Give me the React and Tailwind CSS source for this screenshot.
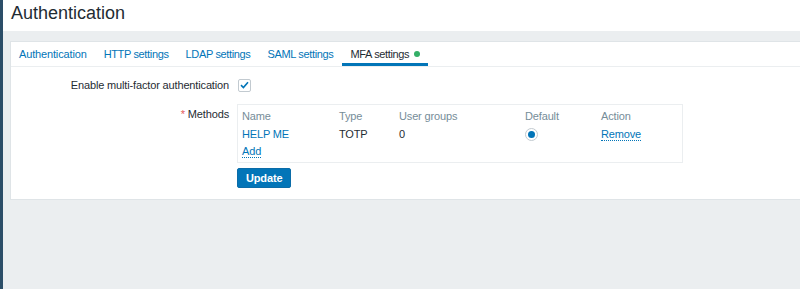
import React from 'react';

const TABS = ['Authentication', 'HTTP settings', 'LDAP settings', 'SAML settings'];

export default function App() {
  return (
    <div className="h-[289px] w-[800px] flex bg-[#ebeef0] overflow-hidden text-[11px] tracking-[-0.15px] text-[#1f2c33]" style={{ fontFamily: '"Liberation Sans", Arial, sans-serif' }}>
      <div className="w-[3px] bg-[#2c4e68] shrink-0" />
      <div className="flex-1 flex flex-col">
        {/* Header */}
        <div className="h-[31px] bg-white pl-[8px] pt-[4px]">
          <h1 className="text-[18px] leading-[18px] tracking-normal">Authentication</h1>
        </div>

        {/* Panel */}
        <div className="mt-[10px] ml-[7px] bg-white border border-[#dfe4e7] border-r-0 h-[159px]">
          {/* Tabs */}
          <div className="flex h-[25px] border-b border-[#ebeef0] tracking-[-0.35px]">
            {TABS.map((t, i) => (
              <div key={t} className={`${i === 0 ? 'tracking-[-0.15px]' : ''} px-[8px] flex items-center text-[#0275b8] mr-[1px]`}>{t}</div>
            ))}
            <div className="px-[8px] flex items-center gap-[5px] border-b-[3px] border-[#0275b8] pt-[3px]">
              MFA settings
              <span className="w-[6px] h-[6px] rounded-full bg-[#34af67]" />
            </div>
          </div>

          {/* Form */}
          <div className="pt-[11px]">
            <div className="flex items-center h-[14px]">
              <div className="w-[218px] text-right">Enable multi-factor authentication</div>
              <div className="ml-[9px] w-[13px] h-[13px] border border-[#c2cad0] rounded-[2px] flex items-center justify-center">
                <svg width="9" height="8" viewBox="0 0 9 8">
                  <path d="M1 4.2 L3.4 6.5 L8 1.3" fill="none" stroke="#0275b8" strokeWidth="1.6" />
                </svg>
              </div>
            </div>

            <div className="flex mt-[12px]">
              <div className="w-[218px] text-right pt-[2px]">
                <span className="text-[#e45959]">*</span> Methods
              </div>
              <div className="ml-[8px] w-[446px] h-[59px] border border-[#ebeef0] px-[4px] pt-[3px]">
                <div className="flex h-[17px] items-center text-[#768d99]">
                  <div className="w-[97px]">Name</div>
                  <div className="w-[60px]">Type</div>
                  <div className="w-[126px]">User groups</div>
                  <div className="w-[76px]">Default</div>
                  <div>Action</div>
                </div>
                <div className="flex h-[18px] items-center">
                  <div className="w-[97px] text-[#0275b8]">HELP ME</div>
                  <div className="w-[60px]">TOTP</div>
                  <div className="w-[126px]">0</div>
                  <div className="w-[76px]">
                    <div className="w-[13px] h-[13px] rounded-full border border-[#c2cad0] flex items-center justify-center">
                      <div className="w-[7px] h-[7px] rounded-full bg-[#0275b8]" />
                    </div>
                  </div>
                  <div className="text-[#0275b8] border-b border-dotted border-[#0275b8] leading-[12px]">Remove</div>
                </div>
                <div className="flex h-[17px] items-center">
                  <span className="text-[#0275b8] border-b border-dotted border-[#0275b8] leading-[12px]">Add</span>
                </div>
              </div>
            </div>

            <div className="ml-[226px] mt-[5px]">
              <button className="h-[20px] px-[8px] bg-[#0275b8] text-white rounded-[2px] border border-[#0b6ca8] font-bold">Update</button>
            </div>
          </div>
        </div>
      </div>
    </div>
  );
}
